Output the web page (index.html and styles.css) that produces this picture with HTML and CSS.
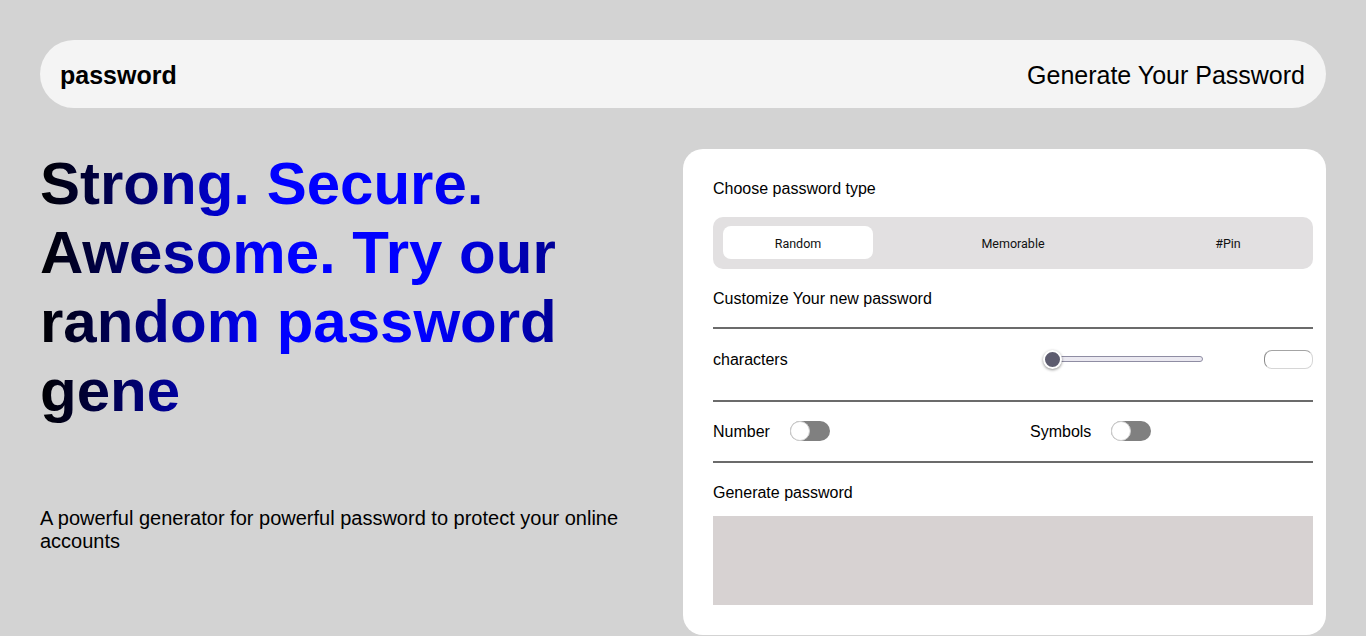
FILE: index.html
```html
<!DOCTYPE html>
<html lang="en">
<head>
<meta charset="utf-8">
<title>password</title>
<link rel="stylesheet" href="styles.css">
</head>
<body>
<div class="page">
  <header class="topbar">
    <div class="brand">password</div>
    <div class="tagline">Generate Your Password</div>
  </header>
  <main class="main">
    <section class="intro">
      <h1 class="headline">Strong. Secure. Awesome. Try our random password gene</h1>
      <p class="lead">A powerful generator for powerful password to protect your online accounts</p>
    </section>
    <section class="card">
      <div class="label title">Choose password type</div>
      <div class="tabs">
        <button class="tab active">Random</button>
        <button class="tab">Memorable</button>
        <button class="tab">#Pin</button>
      </div>
      <div class="label subtitle">Customize Your new password</div>
      <div class="divider"></div>
      <div class="row chars">
        <span class="label">characters</span>
        <div class="slider"><div class="track"></div><div class="thumb"></div></div>
        <div class="numbox"></div>
      </div>
      <div class="divider d2"></div>
      <div class="row options">
        <div class="opt"><span class="label">Number</span><span class="toggle"><span class="knob"></span></span></div>
        <div class="opt"><span class="label">Symbols</span><span class="toggle"><span class="knob"></span></span></div>
      </div>
      <div class="divider d3"></div>
      <div class="label gen">Generate password</div>
      <div class="output"></div>
    </section>
  </main>
</div>
</body>
</html>
```
FILE: styles.css
```css
* { box-sizing: border-box; }
html, body { margin: 0; padding: 0; }
body {
  background: #d3d3d3;
  font-family: "Liberation Sans", Arial, sans-serif;
  color: #000;
}
.page { padding: 40px 40px 0; }
.topbar {
  height: 68px;
  border-radius: 34px;
  background: #f4f4f4;
  display: flex;
  align-items: center;
  justify-content: space-between;
  padding: 3px 21px 0 20px;
  font-size: 25px;
}
.brand { font-weight: 700; }
.main {
  display: grid;
  grid-template-columns: 1fr 643px;
  column-gap: 40px;
  margin-top: 41px;
  align-items: start;
}
.headline {
  margin: 0;
  font-size: 60px;
  font-weight: 700;
  line-height: normal;
  background: linear-gradient(90deg, #000 0%, #00f 37%, #00f 64%, #000050 100%);
  -webkit-background-clip: text;
  background-clip: text;
  color: transparent;
}
.lead {
  margin: 82px 0 0;
  font-size: 20px;
  line-height: normal;
}
.card {
  background: #fff;
  border-radius: 20px;
  padding: 31px 13px 30px 30px;
  display: flex;
  flex-direction: column;
}
.label { font-size: 16px; line-height: 18px; }
.tabs {
  margin-top: 19px;
  height: 52px;
  background: #e2e0e1;
  border-radius: 10px;
  padding: 0 10px;
  display: flex;
  align-items: center;
  justify-content: space-between;
}
.tab {
  width: 150px;
  height: 33px;
  border: 0;
  border-radius: 8px;
  background: transparent;
  font-family: Roboto, "Liberation Sans", sans-serif;
  font-size: 12.5px;
  color: #111;
  padding: 1px 0 0;
  margin-top: -1px;
}
.tab.active { background: #fff; }
.subtitle { margin-top: 21px; }
.divider { height: 2px; background: #6b6b6b; margin-top: 19px; }
.row { display: flex; align-items: center; }
.chars { margin-top: 20px; height: 20px; }
.chars .label { flex: 1; padding-top: 1px; }
.slider { position: relative; width: 159px; height: 20px; margin-right: 61px; }
.track {
  position: absolute; left: 0; right: 0; top: 7px;
  height: 6px; border-radius: 3px;
  background: #ebe9f1; border: 1px solid #8f8da3;
}
.thumb {
  position: absolute; left: -1px; top: 1px;
  width: 19px; height: 19px; border-radius: 50%;
  background: #5d5c6f; border: 2px solid #fff;
  box-shadow: 0 1px 3px rgba(0,0,0,0.45);
}
.numbox {
  width: 49px; height: 19px; border-radius: 8px;
  border: 1px solid #d6d6d6;
  border-left-color: #8a8a8a; border-top-color: #a4a4a4;
}
.d2 { margin-top: 31px; }
.options {
  margin-top: 19px; height: 20px;
  display: grid; grid-template-columns: 317px auto;
}
.opt { display: flex; align-items: center; gap: 20px; }
.opt .label { padding-top: 1px; }
.toggle {
  width: 40px; height: 20px; border-radius: 10px;
  background: #808080; display: inline-flex; align-items: center;
}
.knob {
  width: 20px; height: 20px; border-radius: 50%;
  background: #fff; border: 1px solid #d0d0d0;
}
.d3 { margin-top: 20px; }
.gen { margin-top: 21px; }
.output { margin-top: 14px; height: 89px; background: #d7d2d2; }
```
